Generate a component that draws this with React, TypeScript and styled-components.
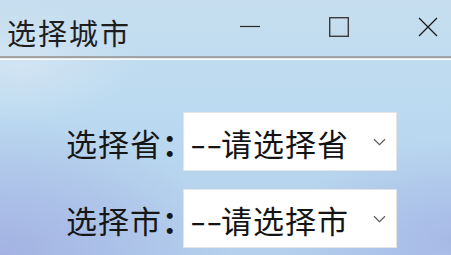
import React from "react";
import styled, { createGlobalStyle } from "styled-components";

const Global = createGlobalStyle`
  html, body { margin: 0; padding: 0; }
  body { font-family: "Noto Sans CJK SC", "Noto Sans", sans-serif; }
`;

const Window = styled.div`
  width: 451px;
  height: 255px;
  overflow: hidden;
  display: flex;
  flex-direction: column;
  background:
    radial-gradient(ellipse 120px 60px at 20px 62px, rgba(214, 230, 244, 0.8), rgba(214, 230, 244, 0) 100%),
    radial-gradient(ellipse 230px 140px at 0px 255px, rgba(162, 176, 226, 0.95), rgba(162, 176, 226, 0) 100%),
    radial-gradient(ellipse 170px 100px at 451px 240px, rgba(166, 184, 230, 0.95), rgba(166, 184, 230, 0) 100%),
    linear-gradient(180deg, #c6deef 0%, #bcdaf0 40%, #b4d0ed 100%);
`;

const TitleBar = styled.div`
  height: 56px;
  flex: none;
  display: flex;
  align-items: center;
  padding-left: 7px;
  box-sizing: border-box;
`;

const Title = styled.div`
  font-size: 29px;
  letter-spacing: 2px;
  color: #1e1e1e;
  margin-top: 8px;
  line-height: 1;
`;

const Controls = styled.div`
  margin-left: auto;
  display: flex;
  align-items: center;
  gap: 69px;
  padding-right: 13px;
  margin-top: -2px;
`;

const ControlIcon = styled.svg`
  width: 20px;
  height: 20px;
  display: block;
`;

const Separator = styled.div`
  height: 4px;
  flex: none;
  border-top: 2px solid #a3a3a3;
  box-sizing: border-box;
  background: linear-gradient(180deg, #dfe8ef 0 1px, #ffffff 1px 2px);
`;

const Content = styled.div`
  display: flex;
  flex-direction: column;
  gap: 18px;
  padding: 52px 0 0 66px;
`;

const Row = styled.div`
  display: flex;
  align-items: center;
`;

const Label = styled.div`
  width: 117px;
  font-size: 31px;
  color: #161616;
  line-height: 1;
  white-space: nowrap;
  margin-top: 1px;
  letter-spacing: 1px;
`;

const Colon = styled.span`
  font-feature-settings: "hwid";
  font-weight: 700;
  letter-spacing: 0;
`;

const SelectBox = styled.div`
  width: 214px;
  height: 59px;
  box-sizing: border-box;
  background: #ffffff;
  border: 1px solid #e4e4e4;
  display: flex;
  align-items: center;
  padding: 0 10px 0 6px;
`;

const Dash = styled.span`
  flex: none;
  width: 31px;
  font-size: 31px;
  color: #141414;
  line-height: 1;
  white-space: nowrap;
  transform: scaleX(1.5);
  transform-origin: left center;
  margin-top: 1px;
`;

const SelectText = styled.span`
  font-size: 31px;
  letter-spacing: 1px;
  color: #141414;
  line-height: 1;
  white-space: nowrap;
  margin-top: 1px;
`;

const Chevron = styled.svg`
  margin-left: auto;
  width: 13px;
  height: 8px;
  display: block;
`;

function Select({ name }: { name: string }) {
  return (
    <SelectBox>
      <Dash>--</Dash>
      <SelectText>{name}</SelectText>
      <Chevron viewBox="0 0 13 8">
        <path d="M1 1.2 L6.5 6.6 L12 1.2" fill="none" stroke="#5a5a5a" strokeWidth="1.2" />
      </Chevron>
    </SelectBox>
  );
}

function Field({ label, name }: { label: string; name: string }) {
  return (
    <Row>
      <Label>
        {label}
        <Colon>：</Colon>
      </Label>
      <Select name={name} />
    </Row>
  );
}

export default function App() {
  return (
    <>
      <Global />
      <Window>
        <TitleBar>
          <Title>选择城市</Title>
          <Controls>
            <ControlIcon viewBox="0 0 20 20">
              <path d="M0 9.5 H20" stroke="#2a2a2a" strokeWidth="1.2" />
            </ControlIcon>
            <ControlIcon viewBox="0 0 20 20">
              <rect x="0.7" y="0.7" width="18.6" height="18.6" fill="none" stroke="#3a3a3a" strokeWidth="1.4" />
            </ControlIcon>
            <ControlIcon viewBox="0 0 20 20">
              <path d="M1 1 L19 19 M19 1 L1 19" stroke="#1a1a1a" strokeWidth="1.3" />
            </ControlIcon>
          </Controls>
        </TitleBar>
        <Separator />
        <Content>
          <Field label="选择省" name="请选择省" />
          <Field label="选择市" name="请选择市" />
        </Content>
      </Window>
    </>
  );
}
